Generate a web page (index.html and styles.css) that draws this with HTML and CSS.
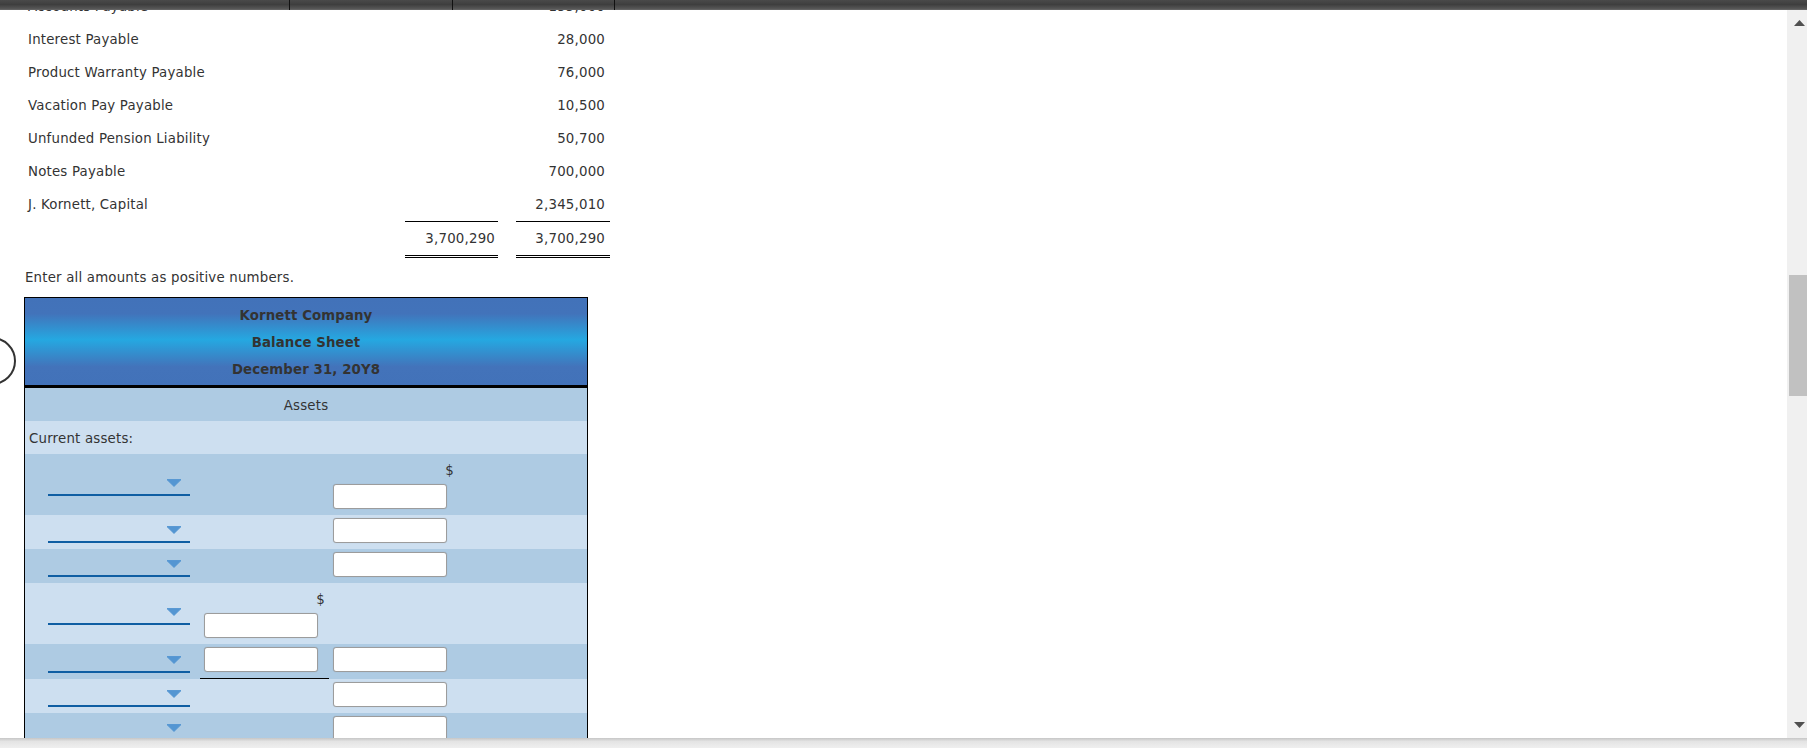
FILE: index.html
```html
<!DOCTYPE html>
<html lang="en">
<head>
<meta charset="utf-8">
<title>Kornett Company – Balance Sheet</title>
<link rel="stylesheet" href="styles.css">
</head>
<body>
<div class="page">
  <div class="topbar">
    <div class="tc tc1"></div>
    <div class="tc tc2"></div>
    <div class="tc tc3"></div>
    <div class="tc tc4"></div>
  </div>
  <div class="frame">
    <div class="viewport">
      <div class="content">
        <div class="tb">
          <div class="lbl">Accounts Payable</div><div class="num"></div><div class="num num3">155,000</div>
          <div class="lbl">Interest Payable</div><div class="num"></div><div class="num num3">28,000</div>
          <div class="lbl">Product Warranty Payable</div><div class="num"></div><div class="num num3">76,000</div>
          <div class="lbl">Vacation Pay Payable</div><div class="num"></div><div class="num num3">10,500</div>
          <div class="lbl">Unfunded Pension Liability</div><div class="num"></div><div class="num num3">50,700</div>
          <div class="lbl">Notes Payable</div><div class="num"></div><div class="num num3">700,000</div>
          <div class="lbl">J. Kornett, Capital</div><div class="num"></div><div class="num num3">2,345,010</div>
          <div class="lbl"></div><div class="num tot">3,700,290</div><div class="num num3 tot">3,700,290</div>
        </div>

        <p class="note">Enter all amounts as positive numbers.</p>

        <div class="bs">
          <div class="bs-head">
            <div>Kornett Company</div>
            <div>Balance Sheet</div>
            <div>December 31, 20Y8</div>
          </div>
          <div class="brow dk center">Assets</div>
          <div class="brow lt left">Current assets:</div>

          <div class="irow dk">
            <div class="ca"><div class="dd"><svg class="tri" width="16" height="8" viewBox="0 0 16 8"><path d="M1 0.6 H15 L8 7.4 Z"/></svg></div></div>
            <div class="cv"></div>
            <div class="cv"><div class="dollar">$</div><input class="inp" type="text"></div>
            <div></div>
          </div>
          <div class="irow lt">
            <div class="ca"><div class="dd"><svg class="tri" width="16" height="8" viewBox="0 0 16 8"><path d="M1 0.6 H15 L8 7.4 Z"/></svg></div></div>
            <div class="cv"></div>
            <div class="cv"><input class="inp" type="text"></div>
            <div></div>
          </div>
          <div class="irow dk">
            <div class="ca"><div class="dd"><svg class="tri" width="16" height="8" viewBox="0 0 16 8"><path d="M1 0.6 H15 L8 7.4 Z"/></svg></div></div>
            <div class="cv"></div>
            <div class="cv"><input class="inp" type="text"></div>
            <div></div>
          </div>
          <div class="irow lt">
            <div class="ca"><div class="dd"><svg class="tri" width="16" height="8" viewBox="0 0 16 8"><path d="M1 0.6 H15 L8 7.4 Z"/></svg></div></div>
            <div class="cv"><div class="dollar">$</div><input class="inp" type="text"></div>
            <div class="cv"></div>
            <div></div>
          </div>
          <div class="irow dk">
            <div class="ca"><div class="dd"><svg class="tri" width="16" height="8" viewBox="0 0 16 8"><path d="M1 0.6 H15 L8 7.4 Z"/></svg></div></div>
            <div class="cv ul"><input class="inp" type="text"></div>
            <div class="cv"><input class="inp" type="text"></div>
            <div></div>
          </div>
          <div class="irow lt">
            <div class="ca"><div class="dd"><svg class="tri" width="16" height="8" viewBox="0 0 16 8"><path d="M1 0.6 H15 L8 7.4 Z"/></svg></div></div>
            <div class="cv"></div>
            <div class="cv"><input class="inp" type="text"></div>
            <div></div>
          </div>
          <div class="irow dk">
            <div class="ca"><div class="dd"><svg class="tri" width="16" height="8" viewBox="0 0 16 8"><path d="M1 0.6 H15 L8 7.4 Z"/></svg></div></div>
            <div class="cv"></div>
            <div class="cv"><input class="inp" type="text"></div>
            <div></div>
          </div>
          <div class="irow lt">
            <div class="ca"><div class="dd"><svg class="tri" width="16" height="8" viewBox="0 0 16 8"><path d="M1 0.6 H15 L8 7.4 Z"/></svg></div></div>
            <div class="cv"></div>
            <div class="cv"><input class="inp" type="text"></div>
            <div></div>
          </div>
        </div>
      </div>
      <div class="help-ring"></div>
    </div>
    <div class="vscroll">
      <div class="sb-btn sb-up"><svg width="11" height="6" viewBox="0 0 11 6"><path d="M5.5 0 L11 6 H0 Z"/></svg></div>
      <div class="sb-track"><div class="sb-thumb"></div></div>
      <div class="sb-btn sb-down"><svg width="11" height="6" viewBox="0 0 11 6"><path d="M0 0 H11 L5.5 6 Z"/></svg></div>
    </div>
  </div>
  <div class="bottombar"></div>
</div>
</body>
</html>
```

FILE: styles.css
```css
html, body {
  margin: 0;
  padding: 0;
}

body {
  width: 1807px;
  height: 748px;
  overflow: hidden;
  background: #fff;
  color: #333;
  font-family: "DejaVu Sans", Verdana, sans-serif;
  font-size: 13.333px;
  letter-spacing: 0.2px;
}

.page {
  display: flex;
  flex-direction: column;
  height: 748px;
}

/* top dark header strip */
.topbar {
  flex: none;
  height: 10px;
  display: flex;
  background: linear-gradient(#4a4a4a, #3e3e3e 45%, #555 85%, #6a6a6a);
}
.tc { height: 10px; box-sizing: border-box; }
.tc1 { width: 290px; border-right: 1px solid #111; }
.tc2 { width: 163px; border-right: 1px solid #111; }
.tc3 { width: 162px; border-right: 1px solid #111; }
.tc4 { flex: 1; }

.frame {
  flex: none;
  height: 728px;
  display: flex;
}

.viewport {
  flex: 1;
  position: relative;
  overflow: hidden;
}

.content {
  margin-top: -20px;
  padding-left: 24px;
}

/* trial balance list */
.tb {
  display: grid;
  grid-template-columns: 381px 93px 112px;
  line-height: 33px;
}
.tb .lbl { padding-left: 4px; white-space: nowrap; }
.tb .num { text-align: right; padding-right: 3px; }
.tb .num3 { margin-left: 18px; padding-right: 5px; }
.tb .tot {
  border-top: 1px solid #000;
  border-bottom: 3px double #000;
}

.note {
  margin: 12px 0 11px;
  padding-left: 1px;
  line-height: 16px;
}

/* balance sheet form */
.bs {
  width: 564px;
  box-sizing: border-box;
  border: 1px solid #000;
}

.bs-head {
  padding: 4px 0 2px;
  border-bottom: 3px solid #000;
  text-align: center;
  font-weight: bold;
  color: #333;
  letter-spacing: 0.1px;
  background: linear-gradient(#4272b9 0%, #4273ba 18%, #25a8e1 48%, #4373ba 79%, #4272b9 100%);
}
.bs-head div { line-height: 27px; }

.dk { background: #aecbe3; }
.lt { background: #cddff0; }

.brow { height: 31px; padding-top: 2px; line-height: 31px; }
.brow.center { text-align: center; }
.brow.left { padding-left: 4px; }

.irow {
  display: grid;
  grid-template-columns: 175px 129px 129px 1fr;
}

.ca {
  display: flex;
  align-items: center;
}

.dd {
  margin-left: 23px;
  width: 142px;
  height: 22px;
  box-sizing: border-box;
  border-bottom: 2px solid #0f5ea3;
  display: flex;
  justify-content: flex-end;
  align-items: flex-start;
  padding: 5px 8px 0 0;
}
.tri { display: block; }
.tri path {
  fill: #5496d2;
  stroke: #5496d2;
  stroke-width: 1;
  stroke-linejoin: round;
}

.cv {
  padding: 3px 4px 6px;
}
.cv.ul { border-bottom: 1px solid #000; }

.dollar {
  line-height: 27px;
  text-align: right;
}

.inp {
  display: block;
  width: 114px;
  height: 25px;
  margin: 0;
  padding: 0 4px;
  box-sizing: border-box;
  border: 1px solid #9c9c9c;
  border-radius: 3px;
  background: #fff;
  box-shadow: 0 0 1px rgba(0, 0, 0, 0.18);
  font: inherit;
}

/* partially visible round help button at left edge */
.help-ring {
  position: absolute;
  left: -32px;
  top: 327px;
  width: 48px;
  height: 48px;
  box-sizing: border-box;
  border: 2px solid #333;
  border-radius: 50%;
  background: #fff;
}

/* vertical scrollbar */
.vscroll {
  flex: none;
  width: 20px;
  display: flex;
  flex-direction: column;
  background: #f0f0f0;
}
.sb-btn {
  flex: none;
  height: 20px;
  box-sizing: border-box;
  padding-left: 7px;
}
.sb-btn svg { display: block; }
.sb-btn path { fill: #505050; }
.sb-up { padding-top: 10px; }
.sb-down { padding-top: 4px; }
.sb-track { flex: 1; }
.sb-thumb {
  margin: 245px 0 0 2px;
  height: 121px;
  background: #c1c1c1;
}

.bottombar {
  flex: none;
  height: 10px;
  background: linear-gradient(#c6c6c6, #e4e4e4 35%, #efefef);
}
```
